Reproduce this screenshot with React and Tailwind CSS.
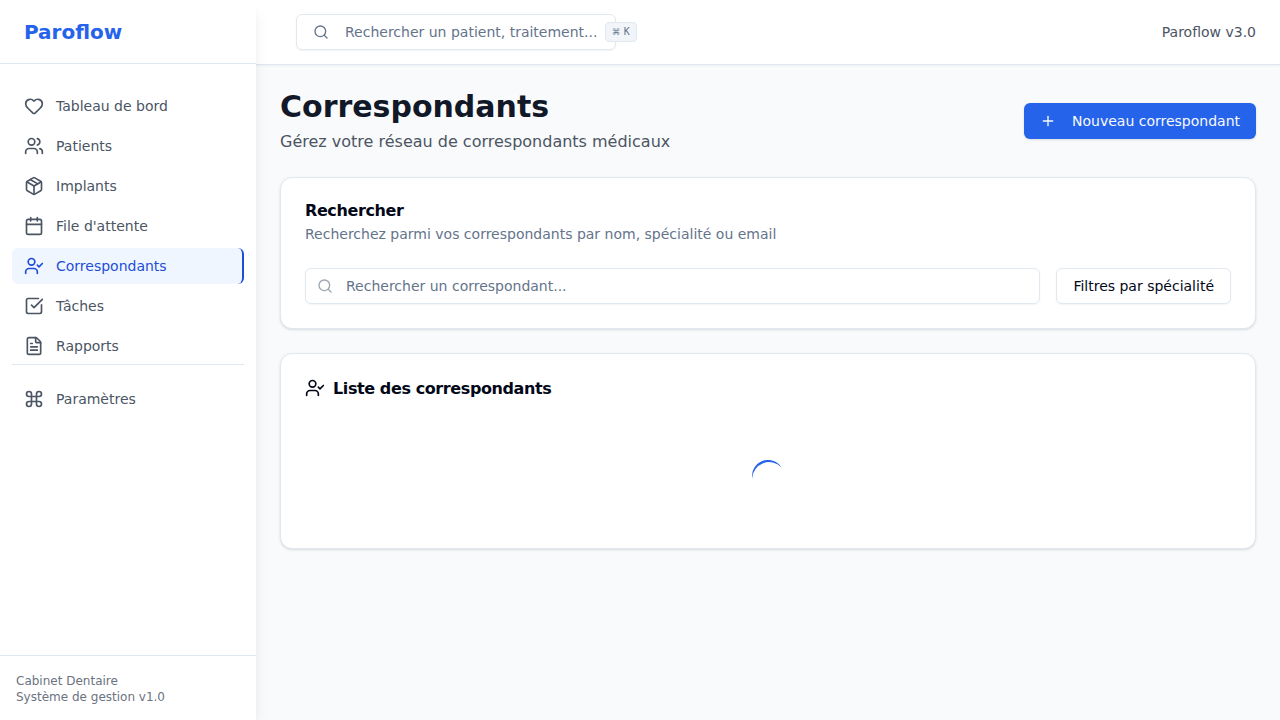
import React from "react";
import { Heart, Users, Package, Calendar, UserCheck, SquareCheckBig, FileText, Command, Search, Plus } from "lucide-react";

const items = [
  { label: "Tableau de bord", icon: Heart },
  { label: "Patients", icon: Users },
  { label: "Implants", icon: Package },
  { label: "File d'attente", icon: Calendar },
  { label: "Correspondants", icon: UserCheck, active: true },
  { label: "Tâches", icon: SquareCheckBig },
  { label: "Rapports", icon: FileText },
];

function NavItem({ label, icon: Icon, active }) {
  return (
    <a
      className={
        "flex h-9 items-center gap-3 rounded-md px-3 text-sm " +
        (active ? "border-r-2 border-[#1d4ed8] bg-[#eff6ff] text-[#1d4ed8]" : "text-[#4b5563]")
      }
    >
      <Icon className="size-5 shrink-0" />
      {label}
    </a>
  );
}

function Sidebar() {
  return (
    <aside className="relative z-10 flex w-64 shrink-0 flex-col bg-white shadow-lg">
      <div className="flex h-16 items-center border-b border-[#e2e8f0] px-6">
        <span className="text-xl font-bold text-[#2563eb]">Paroflow</span>
      </div>
      <nav className="flex-1 px-3 pt-6">
        <div className="flex flex-col gap-1">
          {items.map((item) => (
            <NavItem key={item.label} {...item} />
          ))}
        </div>
        <div className="border-t border-[#e2e8f0] pt-4">
          <NavItem label="Paramètres" icon={Command} />
        </div>
      </nav>
      <div className="border-t border-[#e2e8f0] px-4 pt-[17px] pb-[15px] text-xs text-[#6b7280]">
        <p>Cabinet Dentaire</p>
        <p>Système de gestion v1.0</p>
      </div>
    </aside>
  );
}

function Header() {
  return (
    <header className="flex h-[65px] shrink-0 items-center justify-between border-b border-[#e2e8f0] bg-white pr-6 pl-10 shadow-xs">
      <button className="flex h-9 w-80 items-center rounded-md border border-[#e2e8f0] bg-white px-4 text-sm whitespace-nowrap text-[#64748b] shadow-xs">
        <Search className="mr-4 size-4 shrink-0" />
        <span className="shrink-0">Rechercher un patient, traitement...</span>
        <kbd className="ml-2 flex h-5 shrink-0 items-center gap-1 rounded border border-[#e2e8f0] bg-[#f1f5f9] px-1.5 font-['DejaVu_Sans_Mono',monospace] text-[10px]">
          <span className="text-xs">⌘</span>K
        </kbd>
      </button>
      <span className="text-sm text-[#4b5563]">Paroflow v3.0</span>
    </header>
  );
}

function Spinner() {
  return (
    <svg className="size-8" viewBox="0 0 32 32" fill="#2563eb">
      <path d="M0.15 18.4A16 16 0 0 1 29.4 7.3A17 17 0 0 0 0.15 18.4Z" />
    </svg>
  );
}

export default function App() {
  return (
    <div className="flex h-screen overflow-hidden bg-[#f9fafb] font-['DejaVu_Sans',sans-serif]">
      <Sidebar />
      <div className="flex min-w-0 flex-1 flex-col">
        <Header />
        <main className="flex flex-1 flex-col gap-6 p-6">
          <div className="flex items-center justify-between">
            <div>
              <h1 className="text-3xl font-bold text-[#111827]">Correspondants</h1>
              <p className="mt-1 h-6 leading-[26px] text-[#4b5563]">Gérez votre réseau de correspondants médicaux</p>
            </div>
            <button className="flex h-9 items-center rounded-md bg-[#2563eb] px-4 text-sm text-[#f8fafc] shadow-sm">
              <Plus className="mr-4 size-4" />
              Nouveau correspondant
            </button>
          </div>

          <section className="rounded-xl border border-[#e2e8f0] bg-white p-6 shadow-sm">
            <h2 className="h-4 leading-[18px] font-semibold tracking-tight text-[#020817]">Rechercher</h2>
            <p className="mt-1.5 text-sm text-[#64748b]">
              Recherchez parmi vos correspondants par nom, spécialité ou email
            </p>
            <div className="mt-6 flex gap-4">
              <div className="flex h-9 flex-1 items-center gap-[13px] rounded-md border border-[#e2e8f0] px-[11px] text-sm shadow-xs">
                <Search className="size-4 text-[#9ca3af]" />
                <span className="text-[#64748b]">Rechercher un correspondant...</span>
              </div>
              <button className="h-9 rounded-md border border-[#e2e8f0] bg-white px-4 text-sm text-[#020817] shadow-xs">
                Filtres par spécialité
              </button>
            </div>
          </section>

          <section className="h-[196px] rounded-xl border border-[#e2e8f0] bg-white p-6 shadow-sm">
            <h2 className="flex items-center gap-2 font-semibold tracking-tight text-[#020817]">
              <UserCheck className="size-5" />
              <span className="h-4 leading-[18px]">Liste des correspondants</span>
            </h2>
            <div className="flex justify-center pt-[62px]">
              <Spinner />
            </div>
          </section>
        </main>
      </div>
    </div>
  );
}
